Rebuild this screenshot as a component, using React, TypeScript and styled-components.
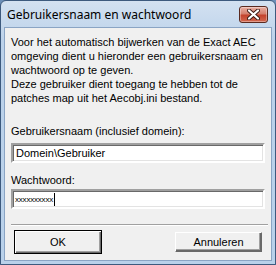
import styled, { createGlobalStyle } from "styled-components";

const GlobalStyle = createGlobalStyle`
  html, body {
    margin: 0;
    padding: 0;
    background: #6c8fb8;
  }
`;

const Window = styled.div`
  width: 276px;
  height: 265px;
  box-sizing: border-box;
  display: flex;
  flex-direction: column;
  background: linear-gradient(#d3e1f1, #bcd2ea 40px, #b9d1ea);
  border: 1px solid #3d5a7e;
  border-radius: 6px 6px 0 0;
  padding: 0 3px 3px 3px;
  overflow: hidden;
`;

const TitleBar = styled.div`
  height: 26px;
  display: flex;
  align-items: center;
  justify-content: space-between;
  padding: 0 4px 0 3px;
  font-family: "Noto Sans", "Open Sans", sans-serif;
  font-size: 12px;
  color: #000;
`;

const CloseButton = styled.div`
  width: 29px;
  height: 17px;
  box-sizing: border-box;
  border: 1px solid #5a2a20;
  border-radius: 3px;
  background: linear-gradient(#e9b0a4, #d5806e 45%, #c4432d 55%, #d2684f);
  box-shadow: inset 0 0 0 1px rgba(255, 255, 255, 0.35);
  display: flex;
  align-items: center;
  justify-content: center;
`;

const Body = styled.div`
  flex: 1;
  background: #f0f0f0;
  border: 1px solid #8aa4c4;
  padding: 7px 5px 0 6px;
  display: flex;
  flex-direction: column;
  font-family: "Liberation Sans", Tahoma, sans-serif;
  font-size: 11px;
  line-height: 14px;
  color: #000;
`;

const Intro = styled.p`
  margin: 0 0 19px 0;
`;

const Label = styled.div<{ $top?: number; $gap?: number }>`
  margin-top: ${(p) => p.$top ?? 0}px;
  margin-bottom: ${(p) => p.$gap ?? 4}px;
`;

const Field = styled.div`
  height: 20px;
  box-sizing: border-box;
  background: #fff;
  border-style: solid;
  border-width: 2px;
  border-color: #a0a0a0 #fff #fff #a0a0a0;
  box-shadow: inset 1px 1px 0 #696969, inset -1px -1px 0 #e3e3e3;
  padding: 1px 3px 1px 2px;
  display: flex;
  align-items: center;
  margin-right: 1px;
`;

const FieldText = styled.span`
  font-size: 11px;
  padding-left: 1px;
`;

const Masked = styled.span`
  font-size: 8px;
  letter-spacing: -0.2px;
  line-height: 8px;
  padding-top: 1px;
`;

const Caret = styled.span`
  display: inline-block;
  width: 1px;
  height: 13px;
  background: #000;
  margin-left: 1px;
`;

const Separator = styled.div`
  height: 0;
  border-top: 1px solid #a0a0a0;
  border-bottom: 1px solid #fff;
  margin: 15px -2px 4px 0;
`;

const ButtonRow = styled.div`
  display: flex;
  justify-content: space-between;
  align-items: center;
  padding: 0 4px 0 3px;
`;

const Button = styled.div<{ $default?: boolean }>`
  width: ${(p) => (p.$default ? 88 : 87)}px;
  height: ${(p) => (p.$default ? 24 : 20)}px;
  box-sizing: border-box;
  background: #f0f0f0;
  border: 1px solid ${(p) => (p.$default ? "#000" : "#fff")};
  box-shadow: ${(p) =>
    p.$default
      ? "inset 1px 1px 0 #fff, inset -1px -1px 0 #696969, inset -2px -2px 0 #a0a0a0"
      : "inset -1px -1px 0 #696969, inset -2px -2px 0 #a0a0a0"};
  border-right-color: ${(p) => (p.$default ? "#000" : "#696969")};
  border-bottom-color: ${(p) => (p.$default ? "#000" : "#696969")};
  display: flex;
  align-items: center;
  justify-content: center;
  font-size: 11px;
`;

function CloseGlyph() {
  return (
    <svg width="13" height="11" viewBox="0 0 13 11">
      <path
        d="M2 1.5 L11 9.5 M11 1.5 L2 9.5"
        stroke="#3a1a14"
        strokeWidth="4"
        strokeLinecap="round"
      />
      <path
        d="M2 1.5 L11 9.5 M11 1.5 L2 9.5"
        stroke="#fff"
        strokeWidth="2.2"
        strokeLinecap="round"
      />
    </svg>
  );
}

export default function App() {
  return (
    <>
      <GlobalStyle />
      <Window>
        <TitleBar>
          <span>Gebruikersnaam en wachtwoord</span>
          <CloseButton>
            <CloseGlyph />
          </CloseButton>
        </TitleBar>
        <Body>
          <Intro>
            Voor het automatisch bijwerken van de Exact AEC
            <br />
            omgeving dient u hieronder een gebruikersnaam en
            <br />
            wachtwoord op te geven.
            <br />
            Deze gebruiker dient toegang te hebben tot de
            <br />
            patches map uit het Aecobj.ini bestand.
          </Intro>
          <Label $gap={5}>Gebruikersnaam (inclusief domein):</Label>
          <Field>
            <FieldText>Domein\Gebruiker</FieldText>
          </Field>
          <Label $top={10} $gap={2}>
            Wachtwoord:
          </Label>
          <Field>
            <Masked>xxxxxxxxxx</Masked>
            <Caret />
          </Field>
          <Separator />
          <ButtonRow>
            <Button $default>OK</Button>
            <Button>Annuleren</Button>
          </ButtonRow>
        </Body>
      </Window>
    </>
  );
}
